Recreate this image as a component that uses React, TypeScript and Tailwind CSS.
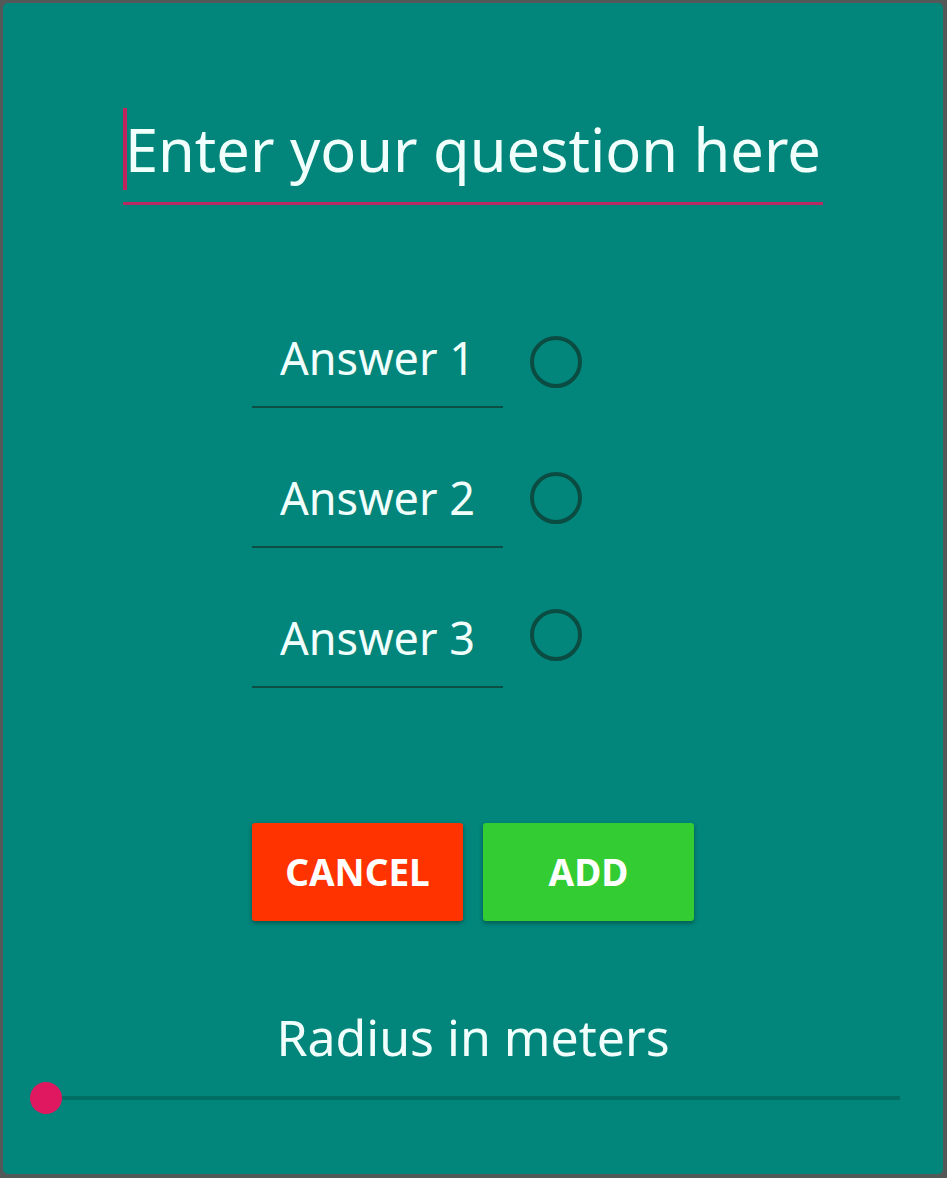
import React from "react";

const font = { fontFamily: '"Noto Sans", "Open Sans", sans-serif' };

function AnswerRow({ label, radioClass }: { label: string; radioClass: string }) {
  return (
    <div className="flex items-center h-[140px]">
      <div className="w-[251px] h-[86px] flex flex-col justify-end">
        <div className="text-center text-[45px] leading-[56px] text-[#f1fffc]">{label}</div>
        <div className="mt-[20px] h-[2px] bg-[#0c4f45]" />
      </div>
      <div className={"ml-[27px] w-[52px] h-[52px] rounded-full border-[4px] border-[#0b4c42] " + radioClass} />
    </div>
  );
}

export default function App() {
  return (
    <div className="w-[947px] h-[1178px] bg-[#525958] p-[3px] pr-[4px] pb-[4px]" style={font}>
      <div className="w-full h-full rounded-[5px] bg-[#02857a] flex flex-col items-center relative overflow-hidden">
        <div className="mt-[105px] w-[700px] relative">
          <div className="absolute left-0 top-0 w-[4px] h-[82px] bg-[#c0245f]" />
          <div className="pl-[2px] text-[59.5px] leading-[82px] text-[#f1fffc] whitespace-nowrap">
            Enter your question here
          </div>
          <div className="mt-[12px] h-[3px] bg-[#b82a62]" />
        </div>
        <div className="mt-[90px] w-[442px] flex flex-col">
          <AnswerRow label="Answer 1" radioClass="-mt-[6px]" />
          <AnswerRow label="Answer 2" radioClass="-mt-[14px]" />
          <AnswerRow label="Answer 3" radioClass="-mt-[20px]" />
          <div className="mt-[108px] flex gap-[20px]">
            <button className="w-[211px] h-[98px] rounded-[3px] bg-[#ff3300] text-white font-bold text-[37px] shadow-[0_2px_4px_rgba(0,0,0,0.35)]">
              CANCEL
            </button>
            <button className="w-[211px] h-[98px] rounded-[3px] bg-[#33cc33] text-white font-bold text-[37px] shadow-[0_2px_4px_rgba(0,0,0,0.35)]">
              ADD
            </button>
          </div>
        </div>
        <div className="mt-[84px] text-[50px] leading-[64px] text-[#f1fffc]">Radius in meters</div>
        <div className="mt-[12px] w-full pl-[27px] pr-[43px] flex items-center h-[34px]">
          <div className="relative flex-1 h-[4px] bg-[#006e63]">
            <div className="absolute left-0 top-1/2 -translate-y-1/2 w-[32px] h-[32px] rounded-full bg-[#e0185f]" />
          </div>
        </div>
      </div>
    </div>
  );
}
